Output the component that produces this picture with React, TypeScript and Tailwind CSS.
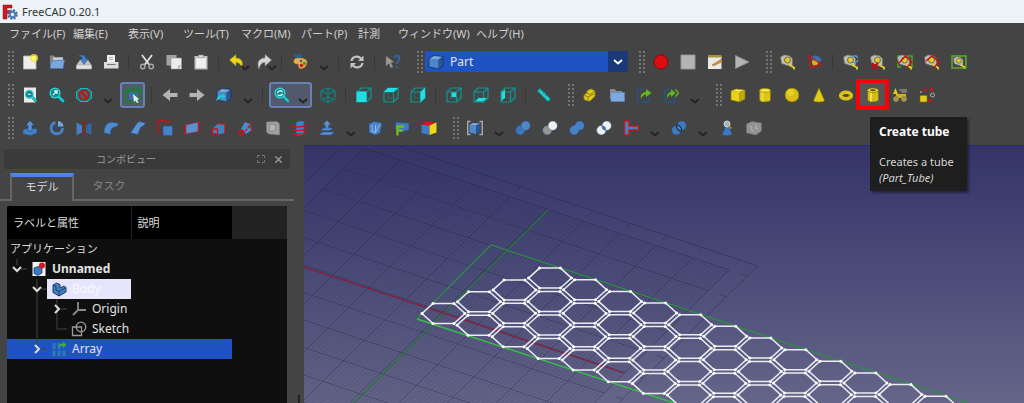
import { type ReactNode } from 'react'
import { X } from 'lucide-react'
import clsx from 'clsx'

// ---------- icons, all drawn on a 16x16 canvas ----------

const tealBox = 'M1 5 10.5 5 10.5 15 1 15ZM1 5 5 1H15L10.5 5M15 1V11L10.5 15'

const WireCube = ({ face }: { face?: string }) => (
  <>
    <path d="M5 1.500V11H15M5 11 1 15" fill="none" stroke="#0f8f8c" strokeWidth=".8" strokeDasharray="1.5 1" />
    <path d={tealBox} fill="none" stroke="#0f9491" strokeWidth="1.2" />
    {face && <path d={face} fill="#22dde2" />}
  </>
)

const Tape = () => (
  <>
    <path d="M.5 3 4 1 9 1.500 12.500 4.500 12.500 11.500H7L1.500 9.500Z" fill="#bcbcb4" stroke="#6a6a60" strokeWidth=".6" />
    <circle cx="7.500" cy="6" r="3" fill="#dfcb24" stroke="#4a4a33" strokeWidth=".7" />
    <path d="M9 11 14 13.500V15.500" fill="none" stroke="#e8d51c" strokeWidth="1.800" />
  </>
)

const Lens = ({ mark }: { mark: string }) => (
  <>
    <path d="M9.500 9.500 14 14" stroke="#0b7f86" strokeWidth="3.600" strokeLinecap="round" />
    <path d="M9.500 9.500 14 14" stroke="#25cdd1" strokeWidth="2.200" strokeLinecap="round" />
    <circle cx="6" cy="6" r="4.800" fill="#14858b" stroke="#2bcfd1" strokeWidth="1.600" />
    <path d={mark} fill="none" stroke="#d8f6f6" strokeWidth="1.300" />
  </>
)

const Spheres = ({ left, right }: { left: string; right: string }) => (
  <>
    <circle cx="5.300" cy="10.300" r="4.700" fill={left} stroke="#2a4f7c" strokeWidth=".5" />
    <circle cx="10.700" cy="5.700" r="4.700" fill={right} stroke="#2a4f7c" strokeWidth=".5" />
  </>
)

const BlueCube = () => (
  <>
    <path d="M1 4.500 10.500 5.500V15L1 13Z" fill="#4c87c9" />
    <path d="M1 4.500 6 1.500 15 2.500 10.500 5.500Z" fill="#79a9de" />
    <path d="M10.500 5.500 15 2.500V11.500L10.500 15Z" fill="#2a5794" />
    <path d="M1 4.500 6 1.500 15 2.500V11.500L10.500 15 1 13Z" fill="none" stroke="#17345c" strokeWidth=".8" />
  </>
)

const icons: Record<string, ReactNode> = {
  new: (
    <>
      <path d="M1.500 2H14V15H1.500Z" fill="#ededeb" stroke="#b9b9b5" strokeWidth=".8" />
      <circle cx="12" cy="4" r="4" fill="#f3e94a" opacity=".75" />
      <circle cx="12" cy="4" r="2" fill="#fffb60" />
    </>
  ),
  open: (
    <>
      <path d="M1 1.500H5L6 3H14V13H1Z" fill="#858585" />
      <path d="M4 3.500H14V8H4Z" fill="#c9c9c9" />
      <path d="M2.500 7 15.500 6 14 14.500H1Z" fill="#79a8dd" stroke="#4777b0" strokeWidth=".8" />
    </>
  ),
  save: (
    <>
      <path d="M4 6H12L15.500 11V15H.5V11Z" fill="#c4c4c4" />
      <path d="M.5 11H15.500V15H.5Z" fill="#e3e3e3" stroke="#aaa" strokeWidth=".6" />
      <path d="M2.500 1.500C7 0 10 2 10 5H12.500L8 10.500 4 5H6.500C6.500 3 5 2 2.500 1.500Z" fill="#4380c6" stroke="#2c5790" strokeWidth=".5" />
    </>
  ),
  print: (
    <>
      <path d="M4 1H12V9H4Z" fill="#f1f1f1" />
      <path d="M6 3.500H10M6 5.500H10" stroke="#aaa" />
      <path d="M1 8H15.500V14.500H1Z" fill="#dcdcdc" />
      <path d="M4 10.500H12.500" stroke="#777" />
    </>
  ),
  cut: (
    <>
      <path d="M3 1 10.500 11M13 1 5.500 11" stroke="#e0e0e0" strokeWidth="1.800" />
      <circle cx="3.800" cy="12.500" r="2.200" fill="none" stroke="#a9a9a9" strokeWidth="1.400" />
      <circle cx="12.200" cy="12.500" r="2.200" fill="none" stroke="#a9a9a9" strokeWidth="1.400" />
    </>
  ),
  copy: (
    <>
      <path d="M.5 1H10.500V11.500H.5Z" fill="#a2a2a2" />
      <path d="M5 4H15.500V15H5Z" fill="#ececec" stroke="#999" strokeWidth=".6" />
      <path d="M15.500 11.500 12 15V11.500Z" fill="#b0b0b0" />
    </>
  ),
  paste: (
    <>
      <path d="M1.500 2H14.500V15.500H1.500Z" fill="#c0c0be" />
      <path d="M3 4H13V14H3Z" fill="#efefed" />
      <path d="M5.500 1H10.500V3.800H5.500Z" fill="#d8d8d8" stroke="#888" strokeWidth=".6" />
    </>
  ),
  undo: <path d="M.5 6 7 .5V4C12.500 4 15 8.500 12.500 14.500 12 11 10.500 8.500 7 8.500V12Z" fill="#ead61f" stroke="#a08a08" strokeWidth=".6" />,
  redo: <path d="M15.500 6 9 .5V4C2.500 4 .5 9 3 15 4 11 5.500 8.500 9 8.500V12Z" fill="#d4d4d4" stroke="#8b8b8b" strokeWidth=".6" />,
  palette: (
    <>
      <path d="M2 6C3 3 12 3 15 7 16 12 11 15.500 8 14.500 5 13 8 10 5 10 3 10 1 9 2 6Z" fill="#e5ab4d" stroke="#a87129" strokeWidth=".5" />
      <path d="M1.500 .5H10V4H3.500Z" fill="#2f5c94" />
      <circle cx="9.500" cy="11.500" r="1.800" fill="#d01818" />
      <circle cx="12.500" cy="9.300" r="1.600" fill="#2f9e2a" />
      <circle cx="9" cy="7" r="1.200" fill="#2a5da0" />
    </>
  ),
  refresh: (
    <>
      <path d="M2.500 7C3 2.500 9 1 12 4.500M13.500 9C13 13.500 7 15 4 11.500" fill="none" stroke="#c3c3c3" strokeWidth="2.200" />
      <path d="M14.500 1.500V7H9ZM1.500 14.500V9H7Z" fill="#c3c3c3" />
    </>
  ),
  whatsthis: (
    <>
      <path d="M1 2 9 8 6 8.500 8 13 6 14 4 9.500 1 12Z" fill="#999" stroke="#6c6c6c" strokeWidth=".5" />
      <path d="M9.500 4C9.500 .5 15 1 14.500 5 14 7.500 12 7 12 10" fill="none" stroke="#38659b" strokeWidth="1.800" />
      <circle cx="12" cy="13" r="1.200" fill="#38659b" />
    </>
  ),
  record: <circle cx="8" cy="8" r="7" fill="#dc0d12" stroke="#910608" />,
  stop: <path d="M1 1H15V15H1Z" fill="#b4b4b4" stroke="#949494" />,
  notes: (
    <>
      <path d="M1 2H14.500V15H1Z" fill="#e9e9e7" />
      <path d="M1 1H14.500V3.500H1Z" fill="#a8902c" />
      <path d="M5 11 14 5.500 15.500 7.500 7 11.500Z" fill="#df9440" stroke="#885013" strokeWidth=".5" />
    </>
  ),
  play: <path d="M1.500 1.500 15 8 1.500 14.500Z" fill="#b4b4b4" stroke="#8e8e8e" />,
  measure: <Tape />,
  measureAngle: (
    <>
      <path d="M3 3.500C7 0 13 1 14.500 6L11 10 6 6Z" fill="#386fae" />
      <circle cx="8" cy="8.500" r="3" fill="#cdb51f" />
      <path d="M2 2 14 10 4 14Z" fill="none" stroke="#c3161c" strokeWidth="1.500" />
    </>
  ),
  measureRefresh: (
    <>
      <Tape />
      <path d="M9 4C10 1 14 1 14.500 4M15 6C14 9 11 9 9.500 7" fill="none" stroke="#5c92d2" strokeWidth="1.500" />
    </>
  ),
  measureClear: (
    <>
      <Tape />
      <path d="M2 9 8 15M8 9 2 15" stroke="#c80c10" strokeWidth="2" />
    </>
  ),
  measureAll: (
    <>
      <path d="M1 6V2H6M10 2H15V13H11M1 9V13H4" fill="none" stroke="#4fa524" strokeWidth="1.500" />
      <Tape />
      <path d="M1 10 8.500 2 15 8 10 13" fill="none" stroke="#cb1217" strokeWidth="1.500" />
    </>
  ),
  measure3d: (
    <>
      <Tape />
      <path d="M2 7 8 2 15 8 10 13.500" fill="none" stroke="#cb1217" strokeWidth="1.500" />
    </>
  ),
  measureDelta: (
    <>
      <path d="M1 2H15V14H1Z" fill="none" stroke="#5cab2a" strokeWidth="1.500" />
      <g transform="translate(2 2) scale(.8)">
        <Tape />
      </g>
    </>
  ),
  fitAll: (
    <>
      <path d="M2 .5H14V15.500H2Z" fill="#e9e9e7" />
      <g transform="translate(2.500 2.500) scale(.8)">
        <Lens mark="M4 6H8" />
      </g>
    </>
  ),
  fitSelection: <Lens mark="M4 8 8 4M5 4H8V7" />,
  drawStyle: (
    <>
      <path d="M4 1.500H12L15.500 5V11L12 14.500H4L.5 11V5Z" fill="#0b8e91" stroke="#16b9bb" />
      <circle cx="8" cy="8" r="4.800" fill="#55605f" stroke="#b8161a" strokeWidth="2" />
      <path d="M4.500 4.500 11.500 11.500" stroke="#b8161a" strokeWidth="2" />
    </>
  ),
  boundBox: (
    <>
      <path d="M4 5 10 4.500 13 6V12L9 14 4 12Z" fill="#3a6fb6" />
      <path d="M.7 4.500 5 .8H15.300V11L11 15.300H.7ZM.7 4.500H11V15.300M11 4.500 15.300 .8" fill="none" stroke="#118a2b" strokeWidth="1.400" />
      <path d="M8 7 14.500 12.500H12L13.500 15.500 12 16 10.500 13.500 9 15Z" fill="#eee" />
    </>
  ),
  back: <path d="M.5 8 8 2V6H15.500V10H8V14Z" fill="#b3b3b3" />,
  forward: <path d="M15.500 8 8 2V6H.5V10H8V14Z" fill="#b3b3b3" />,
  linkNav: (
    <>
      <BlueCube />
      <path d="M0 14.500C1 9 3 8 6 8V6L10 9.500 6 12.500V10.500C4 10.500 2 12 0 14.500Z" fill="#20c8ca" />
    </>
  ),
  zoom: <Lens mark="M3.500 6C4 3.500 7.500 3 8.500 5M8.500 6.500C8 9 4.500 9 3.500 7.500" />,
  isometric: (
    <path d="M8 .8 15 4V12L8 15.500 1 12V4ZM1 4 8 7 15 4M8 7V15M8 1V6M8 10 3 12M8 10 13 12" fill="none" stroke="#0f8883" strokeWidth="1.100" />
  ),
  front: <WireCube face="M.5 4.500H10.500V15H.5Z" />,
  top: <WireCube face="M1 5 5 1H15L10.500 5Z" />,
  right: <WireCube face="M10.500 5 15 1V11L10.500 15Z" />,
  rear: <WireCube face="M5.500 5.500H10V10H5.500Z" />,
  bottom: <WireCube face="M2 14.500 5.500 11H14L10 14.500Z" />,
  left: <WireCube face="M1.500 5.500 5 2.500V10.500L1.500 14Z" />,
  ruler: (
    <>
      <path d="M1.500 4 4 1.500 14.500 12 12 14.500Z" fill="#22d0d4" stroke="#0b8c91" strokeWidth=".8" />
      <path d="M4 4 5.500 3M6.500 6.500 8 5.500M9 9 10.500 8" stroke="#087579" strokeWidth=".8" />
    </>
  ),
  part: (
    <>
      <path d="M2 8 5 6V4L9 2 13 4V9L8 14 4 13.500 2 12Z" fill="#e2cb16" stroke="#a08f10" strokeWidth=".8" />
      <path d="M5 6 8 7.500 13 4M2 8 6 10 13 6.500M6 10V13" fill="none" stroke="#837408" strokeWidth=".9" />
    </>
  ),
  group: (
    <>
      <path d="M1 2H6L7 4H13V12H1Z" fill="#8c8c8c" />
      <path d="M2 5.500H15.500V14.500H2Z" fill="#7eabdf" stroke="#5e8cc4" strokeWidth=".6" />
    </>
  ),
  link: (
    <>
      <path d="M7 2.500H3.500Q1.500 2.500 1.500 4.500V13Q1.500 15 3.500 15H11Q13 15 13 13V10" fill="none" stroke="#2b527f" strokeWidth="1.800" />
      <path d="M5 12C4 7 7 5 10 5V2L15.500 6 10 10V7.500C8 7.500 6 9 5 12Z" fill="#61b81d" />
    </>
  ),
  linkMake: (
    <>
      <path d="M7 2.500H3.500Q1.500 2.500 1.500 4.500V13Q1.500 15 3.500 15H10Q12 15 12 13V10" fill="none" stroke="#2b527f" strokeWidth="1.800" />
      <path d="M4 12C3.500 7 6 5 8 5V2L12.500 6 8 10V7.500C6.500 7.500 5 9 4 12Z" fill="#61b81d" />
      <path d="M12.500 2.500 15.500 6 12.500 9.500" fill="none" stroke="#61b81d" strokeWidth="1.400" />
    </>
  ),
  box: (
    <>
      <path d="M1 4 9.500 5V15L1 13Z" fill="#e8d214" />
      <path d="M1 4 6 2 15 3 9.500 5Z" fill="#fff04a" />
      <path d="M9.500 5 15 3V12L9.500 15Z" fill="#c0aa0a" />
      <path d="M1 4 6 2 15 3V12L9.500 15 1 13Z" fill="none" stroke="#8c7c08" strokeWidth=".6" />
    </>
  ),
  cylinder: (
    <>
      <path d="M2.500 3.500V13C3 15.500 13 15.500 13.500 13V3.500Z" fill="#dcc516" stroke="#857509" strokeWidth=".6" />
      <path d="M5.500 5V14.500" stroke="#eedd3a" strokeWidth="2" />
      <ellipse cx="8" cy="3.300" rx="5.500" ry="2" fill="#f6e640" stroke="#857509" strokeWidth=".6" />
    </>
  ),
  sphere: (
    <>
      <circle cx="8" cy="8" r="7" fill="#d8be12" stroke="#7d6d08" strokeWidth=".6" />
      <circle cx="6.500" cy="5.500" r="3.500" fill="#efdd3a" opacity=".6" />
    </>
  ),
  cone: <path d="M8 1 13.500 13.500C12.500 15.500 3.500 15.500 2.500 13.500Z" fill="#e1cb18" stroke="#857509" strokeWidth=".6" />,
  torus: <ellipse cx="8" cy="8.500" rx="5.300" ry="3.300" fill="none" stroke="#d9c31b" strokeWidth="3.600" />,
  tube: (
    <>
      <path d="M2.500 3.500V13C3 15.500 13 15.500 13.500 13V3.500Z" fill="#d4bc18" stroke="#756709" strokeWidth=".6" />
      <path d="M6 5V14.500" stroke="#f2e13c" strokeWidth="2" />
      <ellipse cx="8" cy="3.300" rx="5.500" ry="2.200" fill="#f0de38" stroke="#756709" strokeWidth=".6" />
      <ellipse cx="8" cy="3.300" rx="3" ry="1" fill="#5d5106" />
    </>
  ),
  primitives: (
    <>
      <path d="M3.500 1 6 7H1Z" fill="#e1cb18" />
      <path d="M7 3H15M9 5H15" stroke="#a8a8a8" />
      <path d="M4 7H14V11H4Z" fill="#cdb516" />
      <circle cx="4" cy="12" r="2.500" fill="#a3983e" stroke="#8d895f" />
      <circle cx="12" cy="12" r="2.500" fill="#a3983e" stroke="#8d895f" />
    </>
  ),
  builder: (
    <>
      <path d="M1 8.500H8V15H1Z" fill="#e2cc18" stroke="#7b6d08" strokeWidth=".6" />
      <circle cx="6" cy="3" r="1.700" fill="#c5161a" />
      <circle cx="12.500" cy="2.500" r="1.700" fill="#c5161a" />
      <circle cx="11.500" cy="13.500" r="1.700" fill="#c5161a" />
      <circle cx="13.500" cy="8" r="2" fill="none" stroke="#aaa" />
      <circle cx="2" cy="5" r=".8" fill="#ddd" />
    </>
  ),
  extrude: (
    <>
      <path d="M1 10 6 8 15 9V13L9 15.500 1 14Z" fill="#4480c4" stroke="#275288" strokeWidth=".6" />
      <path d="M8 .5 12.500 5.500H10V11H6V5.500H3.500Z" fill="#5c93d3" stroke="#1d4475" strokeWidth=".6" />
    </>
  ),
  revolve: (
    <>
      <path d="M6.500 2.500A5.700 5.700 0 1 0 13.500 8" fill="none" stroke="#4781c5" strokeWidth="3" />
      <path d="M9 1V6.500H14.500C14.500 4 12.500 1.500 9 1Z" fill="#78a7dc" />
      <path d="M5 4 9.500 7.500 7 9Z" fill="#26558f" />
    </>
  ),
  mirror: (
    <>
      <path d="M.5 2.500 6 5.500V12.500L.5 15Z" fill="#4480c4" />
      <path d="M15.500 2.500 10 5.500V12.500L15.500 15Z" fill="#34659f" />
      <path d="M8 1V15.500" stroke="#b80d12" strokeWidth="2" strokeDasharray="3 1.500" />
    </>
  ),
  fillet: <path d="M1 13C1 6 4 2 9 2L15.500 3.500C15.500 5 14 6.500 12.500 7 9 7 7.500 9.500 7.500 14.500Z" fill="#4f8acb" stroke="#275288" strokeWidth=".7" />,
  chamfer: <path d="M.5 13 7 3 10 1.500 15.500 3 13.500 6 11 7 7.500 14.500Z" fill="#5b92d2" stroke="#275288" strokeWidth=".7" />,
  makeFace: (
    <>
      <path d="M6 6H15.500V15.500H6Z" fill="#4682c8" stroke="#275288" strokeWidth=".6" />
      <path d="M11.500 4V1H1V11.500H4" fill="none" stroke="#b9151a" strokeWidth="1.500" />
    </>
  ),
  ruled: (
    <>
      <path d="M1.500 5 14.500 2V11.500L1.500 14Z" fill="#5a91d1" />
      <path d="M1.500 4V15M14.500 1V12" stroke="#c9151a" strokeWidth="1.500" />
      <path d="M1.500 5 14.500 2M1.500 14 14.500 11.500" stroke="#8e3346" strokeWidth=".8" />
    </>
  ),
  loft: (
    <>
      <path d="M1.500 9 7 3.500 14 4 14 13 7 14.500 1.500 13Z" fill="#4480c4" />
      <path d="M7 3.500 14 4V13M1.500 9H6.500V14H1.500Z" fill="none" stroke="#c9151a" strokeWidth="1.300" />
    </>
  ),
  sweep: (
    <>
      <path d="M3 9 7 2 12 4 14 10 8 14Z" fill="#4f8acb" />
      <path d="M4 13C8 13 10 6 15 1" fill="none" stroke="#c9151a" strokeWidth="1.200" strokeDasharray="3 1" />
      <circle cx="3.500" cy="12.500" r="2.300" fill="none" stroke="#c9151a" strokeWidth="1.500" />
      <path d="M11 6 14.500 10" stroke="#c9151a" strokeWidth="1.200" />
    </>
  ),
  offset: (
    <>
      <path d="M1.500 2 12 1.500 14.500 4V15L4 14 1.500 12Z" fill="#a0a0a0" stroke="#7a7a7a" strokeWidth=".6" />
      <path d="M4.500 4.500H10.500V11H4.500Z" fill="#b4b4b4" stroke="#8a8a8a" />
    </>
  ),
  section: (
    <>
      <path d="M4 2.500 7 1H12V14L9 15.500H4Z" fill="#4480c4" stroke="#275288" strokeWidth=".6" />
      <path d="M1.500 6C5 7.500 11 6.500 14.500 5M1.500 9.800C5 11 11 10.300 14.500 9M1.500 13.500C5 14.500 11 14 14.500 12.500" fill="none" stroke="#d4161b" strokeWidth="1.400" />
    </>
  ),
  crossSections: (
    <>
      <path d="M8 .5 12 4.500H9.500V8H6.500V4.500H4Z" fill="#5b92d2" />
      <path d="M2 10 5 8H14L11 10.500H2ZM1 14 4 12H15.500L12 15H1Z" fill="#5590d2" stroke="#275288" strokeWidth=".5" />
    </>
  ),
  thickness: (
    <>
      <path d="M2 4 7 1.500 15 3 13 13 8 15 2 12.500Z" fill="#4a84c8" stroke="#275288" strokeWidth=".6" />
      <path d="M5 5V11.500L8.500 12.500 12.500 4.500M8.500 5V12" fill="none" stroke="#a9c7ea" strokeWidth=".8" />
    </>
  ),
  projection: (
    <>
      <path d="M1.500 2 15 3V10L8 12 1.500 9Z" fill="#4078bc" stroke="#275288" strokeWidth=".6" />
      <path d="M3.500 15.500V6.500H10M3.500 10.500H8.500" fill="none" stroke="#70bd1d" strokeWidth="2.400" />
    </>
  ),
  colorFace: (
    <>
      <path d="M.5 4.500 8.500 5.500V15L.5 13Z" fill="#3f7bc6" />
      <path d="M.5 4.500 5 1.500 15.500 2.500 8.500 5.500Z" fill="#d8171b" />
      <path d="M8.500 5.500 15.500 2.500V12.500L8.500 15Z" fill="#ecd819" />
    </>
  ),
  compound: (
    <>
      <path d="M3.500 1.500H.7V14.500H3.500M12.500 1.500H15.300V14.500H12.500" fill="none" stroke="#a9a9a9" strokeWidth="1.400" />
      <path d="M2.500 5 9 5.500V14L2.500 12.500Z" fill="#4f89cc" />
      <path d="M2.500 5 6 3 13.500 3.500 9 5.500Z" fill="#7dabdf" />
      <path d="M9 5.500 13.500 3.500V11.500L9 14Z" fill="#28558f" />
    </>
  ),
  boolean: <Spheres left="#3e76b8" right="#4e88cb" />,
  cutBool: <Spheres left="#969696" right="#f1f1f1" />,
  union: (
    <>
      <Spheres left="#4781c5" right="#4781c5" />
      <path d="M5 9.500 10 6" stroke="#4781c5" strokeWidth="6" />
    </>
  ),
  intersection: (
    <>
      <Spheres left="#f1f1f1" right="#f1f1f1" />
      <path d="M6 5.800C9 5.500 10.500 8 9.900 10.300 6.500 10.500 5.500 8.500 6 5.800Z" fill="#3c75b9" />
    </>
  ),
  join: (
    <>
      <path d="M1.500 1H6V6H15.500V10H6V15H1.500" fill="#4681c4" stroke="#c9151a" strokeWidth="1.300" />
      <path d="M1.500 1V15" stroke="#c9151a" strokeWidth="1.300" />
    </>
  ),
  split: (
    <>
      <Spheres left="#3f79be" right="#3f79be" />
      <ellipse cx="8" cy="8" rx="1.800" ry="3.500" fill="#4781c5" stroke="#202a38" transform="rotate(-38 8 8)" />
    </>
  ),
  check: (
    <>
      <path d="M7 6H10L13 14.500C11 16 5 16 3 14.500Z" fill="#3d78be" stroke="#275288" strokeWidth=".6" />
      <circle cx="8" cy="4" r="3" fill="#a4b3ba" stroke="#cfd6d9" />
      <path d="M10 6 12.500 8.500" stroke="#b67a29" strokeWidth="1.800" />
    </>
  ),
  defeature: (
    <>
      <path d="M.5 4 6 1.500 15.500 3V11L10 15 .5 13Z" fill="#929292" stroke="#707070" strokeWidth=".6" />
      <path d="M3 6 6 7 5 10 8 11M9 4 11 6 9 8 12 9" fill="none" stroke="#aeaeae" />
    </>
  ),
  blueCube: <BlueCube />,
  document: (
    <>
      <path d="M1.500 1H14.500V15H1.500Z" fill="#f4f4f4" />
      <path d="M3 7 7 5.500 11 7V12L7 14.500 3 12.500Z" fill="#3e78bd" stroke="#1d4475" strokeWidth=".8" />
      <circle cx="11" cy="4.500" r="3" fill="#d5161b" />
    </>
  ),
  body: (
    <>
      <path d="M2 4 5.500 2 9 3.500V7L13 5 15 6.500V11L8 15 2 11.500Z" fill="#4480c4" stroke="#15335b" strokeWidth=".9" />
      <path d="M2 4 5 5.500V9L8 10.500 15 6.500M8 10.500V15" fill="none" stroke="#15335b" strokeWidth=".9" />
    </>
  ),
  origin: <path d="M7 1V9H15M7 9 2 14" fill="none" stroke="#8a8a8a" strokeWidth="1.800" />,
  sketch: (
    <>
      <path d="M1.500 6H10.500V14.500H1.500Z" fill="none" stroke="#9a9a9a" strokeWidth="1.300" />
      <circle cx="10" cy="6" r="4.800" fill="none" stroke="#9a9a9a" strokeWidth="1.300" />
    </>
  ),
  array: (
    <>
      <path d="M1.500 2H4.500V8H1.500ZM6.500 2H9.500V8H6.500ZM1.500 9.500H4.500V15H1.500ZM6.500 9.500H9.500V15H6.500ZM11.500 9.500H14.500V15H11.500Z" fill="#2d7db2" />
      <path d="M8 6C8 3 10 2.500 12 2.500V.5L15.500 4 12 7V5C10 5 9 5 8 6Z" fill="#3fae3b" />
    </>
  ),
}

const Icon = ({ name }: { name: string }) => (
  <svg viewBox="0 0 16 16" className="size-4 shrink-0" aria-hidden="true">
    {icons[name]}
  </svg>
)

// ---------- toolbars ----------

const Chevron = ({ className }: { className?: string }) => (
  <svg viewBox="0 0 10 6" className={clsx('h-[6px] w-[10px]', className)} fill="none" stroke="currentColor" strokeWidth="2">
    <path d="M1 1 5 4.500 9 1" />
  </svg>
)

const Handle = () => (
  <svg viewBox="0 0 16 22" className="h-[22px] w-4 shrink-0" fill="#747474" aria-hidden="true">
    {[0, 1, 2, 3, 4, 5].map((i) => (
      <g key={i}>
        <rect x="8" y={i * 4} width="2" height="2" />
        <rect x="12" y={i * 4} width="2" height="2" />
      </g>
    ))}
  </svg>
)

const Tool = ({ name }: { name: string }) => (
  <button aria-label={name} className="flex h-[27px] w-[27px] shrink-0 items-center justify-center hover:bg-[#555]">
    <Icon name={name} />
  </button>
)

// undo / redo: the arrow of the menu lies over the icon
const MenuTool = ({ name }: { name: string }) => (
  <div className="relative">
    <Tool name={name} />
    <Chevron className="pointer-events-none absolute right-0 bottom-1 text-[#252525]" />
  </div>
)

const TubeTool = () => (
  <div className="relative">
    <button aria-label="tube" aria-describedby="tube-tip" className="flex h-[27px] w-[27px] items-center justify-center bg-[#555]">
      <Icon name="tube" />
    </button>
    <div className="pointer-events-none absolute -inset-x-[3px] -inset-y-[2px] border-4 border-[#fb0007]" />
    <div
      id="tube-tip"
      role="tooltip"
      className="absolute top-[36px] left-[11px] z-10 h-[74px] w-[97px] bg-[#1e1e1e] px-[9px] pt-[7px] whitespace-nowrap text-[#d4d4d4] shadow-[2px_2px_2px_#0006]"
    >
      <p className="text-[12px] leading-4 font-bold text-white">Create tube</p>
      <p className="mt-[14px] text-[11px] leading-4">Creates a tube</p>
      <p className="text-[11px] leading-4 italic">(Part_Tube)</p>
    </div>
  </div>
)

// '|' is a separator, 'v' a drop-down arrow, '*' marks a checked tool, '+' a tool with its own arrow
const renderItem = (item: string, i: number) => {
  if (item === '|') return <div key={i} className="mx-1 h-4 w-px shrink-0 bg-[#383838]" />
  if (item === 'v')
    return (
      <button key={i} aria-label="more" className="flex h-[27px] w-[21px] shrink-0 items-end justify-center pb-[4px] text-[#252525]">
        <Chevron />
      </button>
    )
  if (item === 'tube') return <TubeTool key={i} />
  if (item[0] === '+') return <MenuTool key={i} name={item.slice(1)} />
  if (item === '*zoom')
    return (
      <button
        key={i}
        aria-label="zoom"
        className="mx-[2px] flex h-[26px] w-[43px] shrink-0 items-center justify-between rounded-[3px] border-2 border-[#6482b8] bg-[#51596a] pr-[2px] pl-[3px]"
      >
        <Icon name="zoom" />
        <Chevron className="mt-3 text-[#252525]" />
      </button>
    )
  if (item[0] === '*')
    return (
      <button
        key={i}
        aria-label={item.slice(1)}
        className="mx-[2px] flex h-[26px] w-[25px] shrink-0 items-center justify-center rounded-[3px] border-2 border-[#6482b8] bg-[#51596a]"
      >
        <Icon name={item.slice(1)} />
      </button>
    )
  return <Tool key={i} name={item} />
}

const Toolbar = ({ items }: { items: string }) => (
  <div role="toolbar" className="flex items-center">
    <Handle />
    {items.split(' ').map(renderItem)}
  </div>
)

const WorkbenchSelect = () => (
  <div className="flex items-center">
    <Handle />
    <label className="flex h-[21px] w-[203px] items-center overflow-hidden rounded-[2px] bg-[#1f52c2] pl-[3px]">
      <Icon name="blueCube" />
      <select aria-label="Workbench" className="h-full flex-1 appearance-none bg-transparent pl-[6px] text-[12px] leading-4 text-[#e4e4e4] outline-none">
        <option>Part</option>
      </select>
      <span className="flex h-full w-5 items-center justify-center bg-[#1b3878] text-white">
        <Chevron />
      </span>
    </label>
  </div>
)

// ---------- menu ----------

const menus = [
  { label: 'ファイル(F)', width: 'w-[64px]' },
  { label: '編集(E)', width: 'w-[55px]' },
  { label: '表示(V)', width: 'w-[55px]' },
  { label: 'ツール(T)', width: 'w-[58px]' },
  { label: 'マクロ(M)', width: 'w-[60px]' },
  { label: 'パート(P)', width: 'w-[57px]' },
  { label: '計測', width: 'w-[40px]' },
  { label: 'ウィンドウ(W)', width: 'w-[78px]' },
  { label: 'ヘルプ(H)', width: 'w-[58px]' },
]

// ---------- model tree ----------

interface TreeRow {
  label: string
  icon: string
  level: number
  state?: 'open' | 'closed'
  lines: string
}

const tree: TreeRow[] = [
  { label: 'Unnamed', icon: 'document', level: 0, state: 'open', lines: 'M10 0V6M14 10H20' },
  { label: 'Body', icon: 'body', level: 1, state: 'open', lines: 'M30 0V20M34 10H40' },
  { label: 'Origin', icon: 'origin', level: 2, state: 'closed', lines: 'M30 0V20M50 0V20M54 10H60' },
  { label: 'Sketch', icon: 'sketch', level: 2, lines: 'M30 0V20M50 0V10H60' },
  { label: 'Array', icon: 'array', level: 1, state: 'closed', lines: 'M30 0V6M34 10H40' },
]

const TreeLabel = ({ row }: { row: TreeRow }) => {
  const width = (row.level + 1) * 20
  const x = width - 10
  return (
    <div className="flex h-5 items-center">
      <svg width={width} height="20" className="shrink-0" fill="none">
        <path d={row.lines} stroke="#454545" />
        {row.state === 'open' && <path d={`M${x - 4} 8 ${x} 12 ${x + 4} 8`} stroke="#ddd" strokeWidth="2" />}
        {row.state === 'closed' && <path d={`M${x - 2} 6 ${x + 2} 10 ${x - 2} 14`} stroke="#ddd" strokeWidth="2" />}
      </svg>
      <span
        className={clsx(
          'flex h-5 flex-1 items-center gap-[5px] pl-[4px] text-[12px] leading-4',
          row.label === 'Body' ? 'bg-[#e6e5fb] text-[#f8f8ff]' : 'text-[#e2e2e2]',
          row.level === 0 && 'font-bold',
        )}
      >
        <Icon name={row.icon} />
        {row.label}
      </span>
    </div>
  )
}

const ModelPanel = () => (
  <aside className="flex w-[304px] shrink-0 flex-col bg-[#444] pt-1">
    <header className="mr-[14px] ml-1 flex h-5 items-center gap-[7px] rounded-[2px] bg-[#3a3a3a] pr-[6px] text-[#9a9a9a]">
      <h2 className="flex-1 text-center text-[10px] leading-4">コンボビュー</h2>
      <button aria-label="float" className="flex size-[11px] items-center justify-center">
        <svg viewBox="0 0 8 8" className="size-2" fill="none" stroke="#777">
          <path d="M.5 3V.5H3M5 .5H7.500V3M7.500 5V7.500H5M3 7.500H.5V5" />
        </svg>
      </button>
      <button aria-label="close">
        <X className="size-[11px]" strokeWidth={3} />
      </button>
    </header>

    <div role="tablist" className="mt-1 mr-[10px] flex h-[28px] border-b-2 border-[#666] pl-[10px] text-[11px] leading-4">
      <button
        role="tab"
        aria-selected="true"
        className="-mb-[2px] w-[64px] border-x-2 border-t-4 border-x-[#666] border-t-[#4a82ee] bg-[#444] pb-[5px] text-[#dedede]"
      >
        モデル
      </button>
      <button role="tab" aria-selected="false" className="w-[70px] text-[#858585]">
        タスク
      </button>
    </div>

    <div className="mt-[5px] flex flex-1">
      <div className="ml-[7px] w-[280px] overflow-hidden rounded-t-[2px] bg-[#0f0f0f]">
        <table className="w-full table-fixed border-collapse text-[11px] leading-4 text-[#dcdcdc]">
          <colgroup>
            <col className="w-[124px]" />
            <col className="w-[101px]" />
            <col />
          </colgroup>
          <thead>
            <tr className="h-[33px] bg-black text-left">
              <th className="border-r border-[#222] pl-[6px] font-normal">ラベルと属性</th>
              <th className="pl-[6px] font-normal">説明</th>
              <th className="bg-[#222]" aria-label="empty" />
            </tr>
          </thead>
          <tbody>
            <tr className="h-5">
              <td colSpan={3} className="pl-[3px]">
                アプリケーション
              </td>
            </tr>
            {tree.map((row) => (
              <tr key={row.label} className="h-5">
                <td className={clsx('p-0', row.label === 'Array' && 'bg-[#1f52c2]')}>
                  <TreeLabel row={row} />
                </td>
                <td className={clsx('p-0', row.label === 'Array' && 'bg-[#1f52c2]')} />
                <td />
              </tr>
            ))}
          </tbody>
        </table>
      </div>
      {/* splitter grip */}
      <div className="ml-[11px] h-2 w-[2px] self-end bg-[#222]" />
    </div>
  </aside>
)

// ---------- 3D view ----------

// grid basis: one major cell along x and along y, starting from the far corner
const U = [36.5, 12.2]
const V = [-20.8, 20.5]
const gridPoint = (u: number, v: number) => `${729 - u * U[0] + v * V[0]} ${270 - u * U[1] + v * V[1]}`

const gridPath = (step: number) => {
  let d = ''
  for (let t = 0; t <= 100; t += step) {
    d += `M${gridPoint(t / 10, 0)}L${gridPoint(t / 10, 10)}M${gridPoint(0, t / 10)}L${gridPoint(10, t / 10)}`
  }
  return d
}

const rulerTicks = Array.from({ length: 11 }, (_, i) => `M${gridPoint(i, -0.5)}L${gridPoint(i, -0.3)}M${gridPoint(-0.5, i)}L${gridPoint(-0.3, i)}`).join('')

const corners = [
  [0, 0],
  [11, -10],
  [32, -10],
  [43, 0],
  [32, 10],
  [11, 10],
]

const cells = Array.from({ length: 4 * 16 }, (_, n) => {
  const i = n % 4
  const j = Math.floor(n / 4)
  return corners.map(([x, y]) => [422 + x + i * 35.5 + j * 35.05, 313.5 + y - i * 11.8 + j * 11.65])
})

const View3D = () => (
  <main className="min-w-0 flex-1 border-t border-[#2a2a7c] bg-gradient-to-b from-[#343468] to-[#656589]">
    <svg viewBox="304 146 720 257" preserveAspectRatio="xMinYMin slice" className="h-full w-full" fill="none">
      <path d={gridPath(1)} stroke="#23233f" strokeWidth=".5" opacity=".18" />
      <path d={gridPath(10)} stroke="#25253f" strokeWidth="1" opacity=".3" />
      <path d={`M${gridPoint(10.5, -0.5)}L${gridPoint(-0.5, -0.5)}L${gridPoint(-0.5, 10.5)}M${gridPoint(10.5, -0.5)}L${gridPoint(10.5, 10.5)}${rulerTicks}`} stroke="#25253f" strokeWidth="1" opacity=".4" />
      <path d="M548 210 354 403" stroke="#24772f" strokeWidth="1.100" />
      <path d="M304 267 624 373" stroke="#8c1c35" strokeWidth="1.200" />
      <path d="M968 403 491 245 417 319" stroke="#2c9040" strokeWidth="1.200" />
      <path d="M417 319 674 403" stroke="#35bd46" strokeWidth="1.400" />
      {cells.map((points, i) => (
        <g key={i}>
          <polygon points={points.map((p) => p.join(',')).join(' ')} stroke="#ebebf2" strokeWidth="1.500" />
          {points.map(([x, y], k) => (
            <circle key={k} cx={x} cy={y} r="1.500" fill="#fff" />
          ))}
        </g>
      ))}
    </svg>
  </main>
)

export default function App() {
  return (
    <div className="flex h-screen flex-col overflow-hidden bg-[#444] font-['Noto_Sans','Noto_Sans_CJK_JP',sans-serif]">
      <header className="flex h-[23px] shrink-0 items-center gap-1 bg-[#ebf3f8] pl-[2px]">
        <svg viewBox="0 0 16 16" className="size-4">
          <path d="M1 15V1H10V4H5V6.500H8.500V9.500H5V15Z" fill="#cb1c22" stroke="#831015" strokeWidth=".5" />
          <circle cx="10.500" cy="10.500" r="4.200" fill="none" stroke="#3d649f" strokeWidth="2" strokeDasharray="2 1.300" />
          <circle cx="10.500" cy="10.500" r="2.700" fill="none" stroke="#4e78b6" strokeWidth="2" />
        </svg>
        <h1 className="text-[11px] leading-4 text-[#333]">FreeCAD 0.20.1</h1>
      </header>

      <nav className="flex h-[22px] shrink-0 items-center pl-[9px] text-[11px] leading-4 text-[#cfcfcf]">
        {menus.map((menu) => (
          <button key={menu.label} className={clsx('shrink-0 text-left whitespace-nowrap', menu.width)}>
            {menu.label}
          </button>
        ))}
      </nav>

      <div className="shrink-0 pb-px">
        <div className="flex h-[33px] items-center gap-[3px]">
          <Toolbar items="new open save print | cut copy paste | +undo +redo | palette v | refresh | whatsthis" />
          <WorkbenchSelect />
          <Toolbar items="record stop notes play" />
          <Toolbar items="measure measureAngle | measureRefresh measureClear measureAll measure3d measureDelta" />
        </div>
        <div className="flex h-[33px] items-center gap-[3px]">
          <Toolbar items="fitAll fitSelection drawStyle v *boundBox | back forward linkNav v | *zoom isometric | front top right | rear bottom left | ruler" />
          <Toolbar items="part group link linkMake v" />
          <Toolbar items="box cylinder sphere cone torus tube primitives builder" />
        </div>
        <div className="flex h-[33px] items-center gap-[3px]">
          <Toolbar items="extrude revolve mirror fillet chamfer makeFace ruled loft sweep offset section crossSections v thickness projection colorFace" />
          <Toolbar items="compound v boolean cutBool union intersection join v split v check defeature" />
        </div>
      </div>

      <div className="flex min-h-0 flex-1">
        <ModelPanel />
        <View3D />
      </div>
    </div>
  )
}
